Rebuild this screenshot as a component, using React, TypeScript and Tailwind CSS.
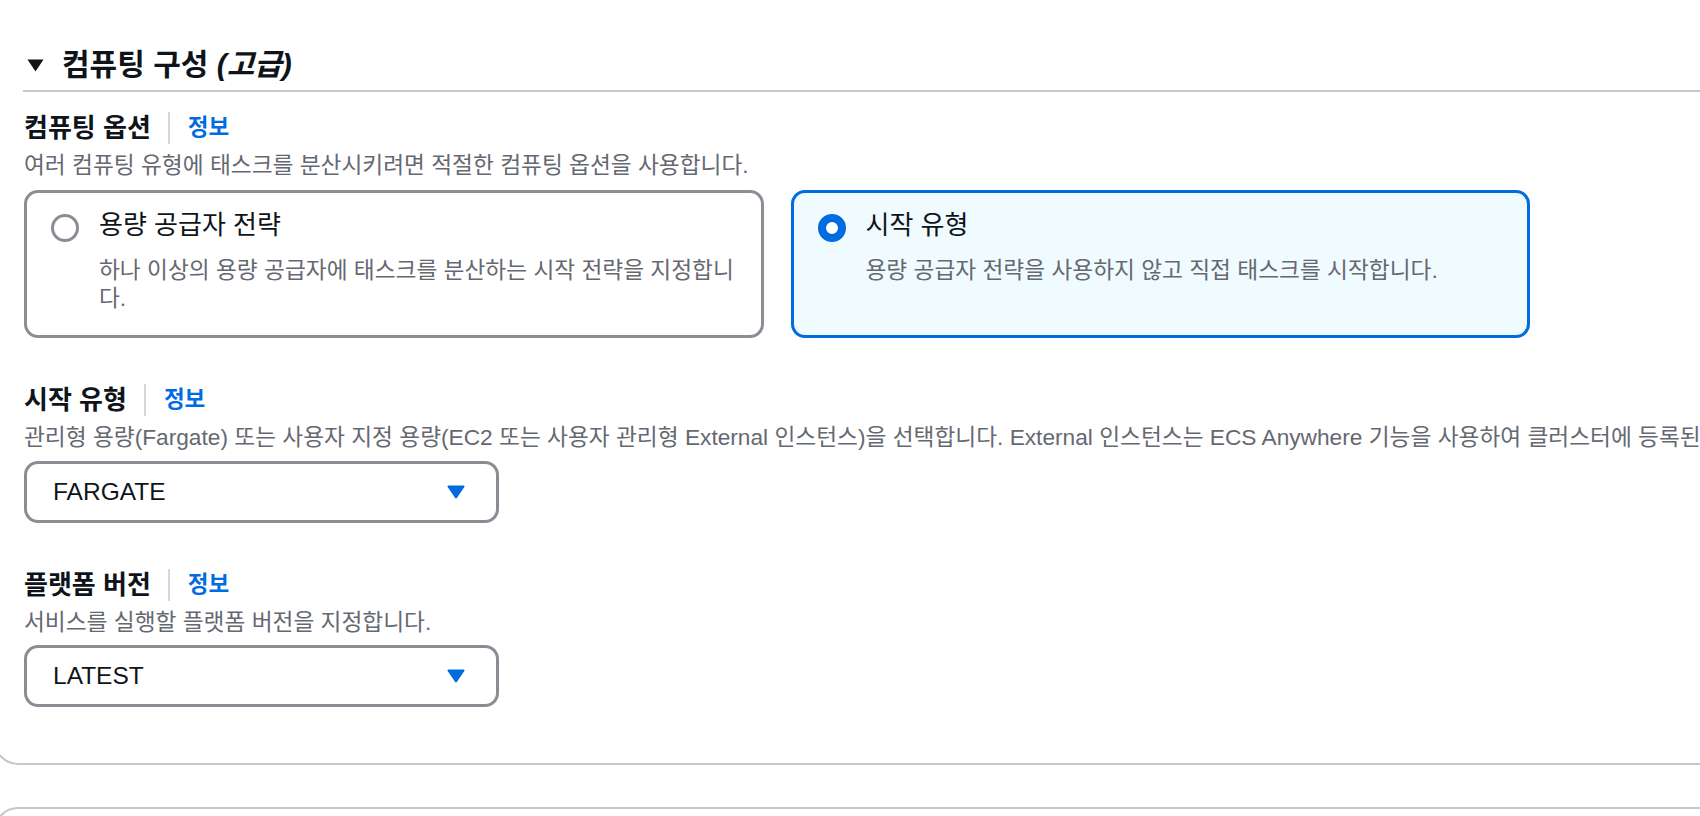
import React from 'react';

function InfoLabel({ label }: { label: string }) {
  return (
    <div className="flex items-center h-[38px]">
      <span className="text-[26px] font-bold leading-[38px] text-[#0f141a]">{label}</span>
      <span className="ml-[17px] w-[2px] h-[32px] bg-[#d5d5da]" />
      <a href="#" className="ml-[18px] text-[22.5px] font-bold leading-[38px] text-[#006ce0]">
        정보
      </a>
    </div>
  );
}

function SelectBox({ value, className }: { value: string; className: string }) {
  return (
    <div
      className={`w-[475px] h-[62px] border-[3px] border-[#8c8c94] rounded-[14px] bg-white flex items-center justify-between pl-[26px] pr-[31px] ${className}`}
    >
      <span className="text-[24.5px] text-[#0f141a]">{value}</span>
      <svg width="18" height="14" viewBox="0 0 18 14">
        <path
          d="M1.5 1.5 H16.5 L9 12.5 Z"
          fill="#006ce0"
          stroke="#006ce0"
          strokeWidth="2"
          strokeLinejoin="round"
        />
      </svg>
    </div>
  );
}

interface TileProps {
  title: string;
  desc: string;
  selected?: boolean;
}

function Tile({ title, desc, selected }: TileProps) {
  return (
    <div
      className={`flex gap-[20px] rounded-[14px] border-[3px] pl-[24px] pr-[22px] pt-[14px] pb-[23px] ${
        selected ? 'border-[#006ce0] bg-[#f0fbff]' : 'border-[#8c8c94] bg-white'
      }`}
    >
      {selected ? (
        <span className="mt-[7px] w-[28px] h-[28px] shrink-0 rounded-full border-[8px] border-[#006ce0] bg-white" />
      ) : (
        <span className="mt-[7px] w-[28px] h-[28px] shrink-0 rounded-full border-[3.5px] border-[#8c8c94] bg-white" />
      )}
      <div className="flex flex-col">
        <span className="text-[26px] leading-[36px] text-[#0f141a]">{title}</span>
        <span className="mt-[13px] text-[22.7px] leading-[28px] text-[#656871]">{desc}</span>
      </div>
    </div>
  );
}

export default function App() {
  return (
    <div className="w-[1700px] h-[816px] overflow-hidden bg-white font-['Liberation_Sans','Noto_Sans_CJK_KR',sans-serif]">
      {/* Expandable container: compute config */}
      <div className="ml-[-6px] mt-[-40px] w-[1800px] border-2 border-[#c6c6cd] rounded-[24px] pl-[28px] pt-[85px] pb-[56px]">
        <div className="flex items-center h-[36px]">
          <svg className="ml-[3px]" width="17" height="13" viewBox="0 0 17 13">
            <path d="M0.5 0.5 H16.5 L8.5 12.5 Z" fill="#0f141a" />
          </svg>
          <h2 className="ml-[18px] text-[30px] font-bold leading-[36px] text-[#0f141a]">
            컴퓨팅 구성 <i>(고급)</i>
          </h2>
        </div>
        <div className="mt-[7px] ml-[-1px] h-[2px] bg-[#c6c6cd]" />

        <div className="mt-[17px]">
          <InfoLabel label="컴퓨팅 옵션" />
          <p className="mt-[4px] text-[22.7px] leading-[28px] text-[#656871]">
            여러 컴퓨팅 유형에 태스크를 분산시키려면 적절한 컴퓨팅 옵션을 사용합니다.
          </p>
          <div className="mt-[11px] w-[1506px] grid grid-cols-2 gap-[27px]">
            <Tile
              title="용량 공급자 전략"
              desc="하나 이상의 용량 공급자에 태스크를 분산하는 시작 전략을 지정합니다."
            />
            <Tile
              selected
              title="시작 유형"
              desc="용량 공급자 전략을 사용하지 않고 직접 태스크를 시작합니다."
            />
          </div>
        </div>

        <div className="mt-[43px]">
          <InfoLabel label="시작 유형" />
          <p className="mt-[4px] text-[22.7px] leading-[28px] text-[#656871] whitespace-nowrap">
            관리형 용량(Fargate) 또는 사용자 지정 용량(EC2 또는 사용자 관리형 External 인스턴스)을 선택합니다. External 인스턴스는 ECS Anywhere 기능을 사용하여 클러스터에 등록된 온프레미스 서버 또는 가상 머신(VM)입니다.
          </p>
          <SelectBox value="FARGATE" className="mt-[10px]" />
        </div>

        <div className="mt-[43px]">
          <InfoLabel label="플랫폼 버전" />
          <p className="mt-[4px] text-[22.7px] leading-[28px] text-[#656871]">
            서비스를 실행할 플랫폼 버전을 지정합니다.
          </p>
          <SelectBox value="LATEST" className="mt-[9px]" />
        </div>
      </div>

      {/* Next container, mostly below the fold */}
      <div className="ml-[-6px] mt-[42px] w-[1800px] h-[120px] border-2 border-[#c6c6cd] rounded-[24px]" />
    </div>
  );
}
